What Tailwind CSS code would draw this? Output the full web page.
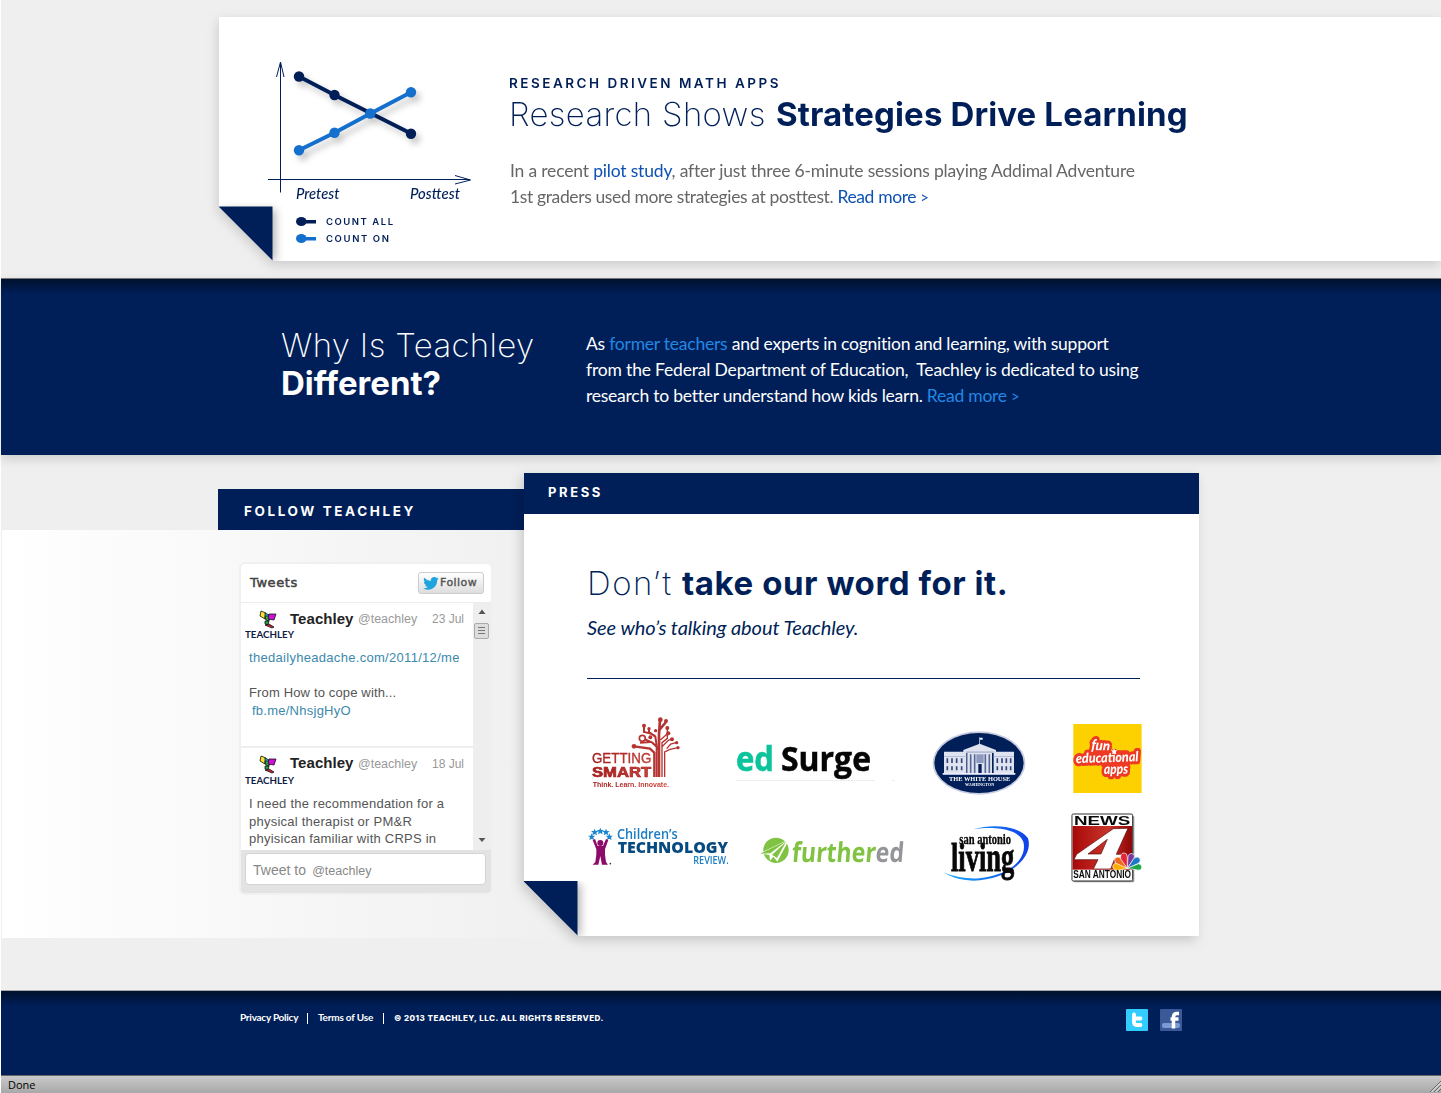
<!DOCTYPE html>
<html lang="en">
<head>
<meta charset="utf-8">
<title>Teachley</title>
<script src="https://cdn.jsdelivr.net/npm/@tailwindcss/browser@4"></script>
</head>
<body class="bg-white overflow-hidden text-[#001f58] font-[Lato,sans-serif]">
<div class="ml-px w-[1440px] h-[1093px] bg-[#efefef] flex flex-col whitespace-nowrap">

  <!-- Research card -->
  <section class="h-[278px] pt-[17px] pl-[218px] shrink-0 relative">
    <div class="drop-shadow-[-1px_4px_6px_rgba(0,0,0,0.15)]">
      <div class="h-[244px] w-[1222px] bg-white flex [clip-path:polygon(0_0,100%_0,100%_100%,54px_100%,0_190px)]">
        <svg class="w-[281px] h-[244px] shrink-0" viewBox="219 17 281 244" font-family="Lato, sans-serif" fill="#001f58">
          <g stroke="#001f58" fill="none">
            <path d="M280.500 62.500V192.500M276.500 77L280.500 62L284 77M268 179.500H470M455 175.500L470.500 180L455 184"/>
          </g>
          <g style="filter:drop-shadow(4px 5px 3px rgba(0,0,0,.22))">
            <path d="M299 76.500L334.500 95L411 133.500" stroke="#001f58" stroke-width="4" fill="none"/>
            <circle cx="299" cy="76.500" r="5.200"/><circle cx="334.500" cy="95" r="5.200"/><circle cx="411" cy="133.700" r="5.200"/>
            <g fill="#146fcd"><path d="M299 150.300L334.500 132.700L370.500 113.500L411 92.300" stroke="#146fcd" stroke-width="4" fill="none"/>
            <circle cx="299" cy="150.300" r="5.200"/><circle cx="334.500" cy="132.700" r="5.200"/><circle cx="370.300" cy="113.500" r="5.200"/><circle cx="411" cy="92.300" r="5.200"/></g>
          </g>
          <g font-size="16" font-style="italic" font-weight="500">
            <text x="296" y="199" textLength="43.500" lengthAdjust="spacingAndGlyphs">Pretest</text>
            <text x="410" y="199" textLength="50" lengthAdjust="spacingAndGlyphs">Posttest</text>
          </g>
          <ellipse cx="301.300" cy="221.500" rx="5.300" ry="4.600"/><path d="M301 220h15v3.600h-15z"/>
          <g fill="#146fcd"><ellipse cx="301.300" cy="238.500" rx="5.300" ry="4.600"/><path d="M301 237h15v3.600h-15z"/></g>
          <g font-family="Inter, sans-serif" font-size="9.500" font-weight="600">
            <text x="326" y="225" textLength="67">COUNT ALL</text>
            <text x="326" y="242" textLength="63">COUNT ON</text>
          </g>
          <path d="M218 206.500H272.500V261z" style="filter:drop-shadow(3px 3px 4px rgba(0,0,0,.3))"/>
        </svg>
        <div class="pl-[9px] pt-[57px]">
          <p class="font-[Inter] font-semibold text-[13.5px] leading-[18px] tracking-[2.5px]">RESEARCH DRIVEN MATH APPS</p>
          <h1 class="font-[Inter] text-[33px] leading-[40px] mt-[2px] flex"><span class="font-extralight tracking-[0.3px] w-[267px]">Research Shows</span><b class="font-bold tracking-[0.13px]">Strategies Drive Learning</b></h1>
          <div class="text-[17.5px] leading-[26px] text-[#666] mt-[24px] ml-px">
            <p class="tracking-[-0.18px]">In a recent <a class="text-[#0d51b3]">pilot study</a>, after just three 6-minute sessions playing Addimal Adventure</p>
            <p class="tracking-[-0.37px]">1st graders used more strategies at posttest. <a class="text-[#0d51b3]">Read more <span class="text-[15px]">&gt;</span></a></p>
          </div>
        </div>
      </div>
    </div>
  </section>

  <!-- Mission band -->
  <section class="h-[177px] shrink-0 border-t border-[#777] bg-[#001f58] bg-linear-to-b from-[#00102e] to-[#001f58] to-[15px] shadow-[0_4px_10px_rgba(0,0,0,0.14)] text-white flex pl-[280px]">
    <h2 class="w-[305px] pt-[47px] font-[Inter] text-[33px] leading-[38px]"><span class="block font-extralight tracking-[0.35px]">Why Is Teachley</span><b class="block font-bold">Different?</b></h2>
    <div class="pt-[52px] text-[17.5px] leading-[26px]">
      <p class="tracking-[-0.23px]">As <a class="text-[#2288e3]">former teachers</a> and experts in cognition and learning, with support</p>
      <p class="tracking-[-0.18px]">from the Federal Department of Education,&nbsp; Teachley is dedicated to using</p>
      <p class="tracking-[-0.24px]">research to better understand how kids learn. <a class="text-[#2288e3]">Read more <span class="text-[15px]">&gt;</span></a></p>
    </div>
  </section>

  <!-- Follow + Press -->
  <section class="h-[535px] shrink-0 flex">
    <div class="w-[523px] shrink-0 pt-[34px]">
      <h3 class="ml-[217px] h-[41px] bg-[#001f58] text-white font-[Inter] font-bold text-[13.5px] leading-[44px] pl-[26px] tracking-[2.6px]">FOLLOW TEACHLEY</h3>
      <div class="ml-px w-[576px] h-[408px] bg-linear-to-r from-white to-[#efefef] pt-[32px] pl-[237px]">
        <!-- Timeline widget -->
        <div class="w-[254px] h-[333px] border-2 border-[#f0f0f0] rounded-md bg-[#e3e3e3] overflow-hidden font-[Liberation_Sans,sans-serif] text-[13px] text-[#555] flex flex-col">
          <div class="h-[38px] bg-white flex items-center justify-between pl-[9px] pr-[7px] shrink-0">
            <b class="font-[DejaVu_Sans] font-normal text-[13px] leading-[18px] tracking-[0.6px] [-webkit-text-stroke:0.5px_#444] text-[#444]">Tweets</b>
            <span class="w-[66px] h-[22px] border border-[#ccc] rounded-[3px] bg-linear-to-b from-white to-[#dedede] flex items-center pl-1 gap-[1px] font-[DejaVu_Sans] text-[11px] tracking-[0.45px] [-webkit-text-stroke:0.4px_#555]">
              <svg class="w-[16px] h-[13px] shrink-0" viewBox="0 0 24 20" fill="#1fa5dd"><path d="M24 2.400a10 10 0 0 1-2.800.8A5 5 0 0 0 23.300.5a10 10 0 0 1-3.100 1.200 4.900 4.900 0 0 0-8.400 4.500A14 14 0 0 1 1.700 1a4.900 4.900 0 0 0 1.500 6.600A5 5 0 0 1 1 7a4.900 4.900 0 0 0 4 4.900 5 5 0 0 1-2.300 0 4.900 4.900 0 0 0 4.600 3.500A10 10 0 0 1 0 17.400 14 14 0 0 0 21.500 5 10 10 0 0 0 24 2.400z"/></svg>Follow</span>
          </div>
          <div class="h-[248px] flex border-t border-[#ececec] shrink-0">
            <div class="w-[232px] bg-white overflow-hidden shrink-0">
              <article class="h-[145px] border-b-2 border-[#eee]">
                <header class="flex h-[37px] pt-[5px]">
                  <svg class="w-[50px] h-[32px] shrink-0 ml-[4px]" viewBox="0 0 50 32"><g stroke="#111" stroke-width=".8"><path fill="#ffe030" d="M16 3l5 2-1 6-5-3z"/><path fill="#15c8e8" d="M20 5l4 2 1 4-5 0z"/><path fill="#28c040" d="M20 8l5 0-1 5-3-1z"/><path fill="#d010d8" d="M24 6l7 0-2 6-6-1z"/><path fill="#28a040" d="M20 13l4 0-1 4-3-1z"/><path fill="#c22a28" d="M20 17l4-1 5 3-2 1z"/></g><text x="0" y="30" font-family="Lato" font-weight="700" font-size="9.500" fill="#101c44" textLength="49" lengthAdjust="spacingAndGlyphs">TEACHLEY</text></svg>
                  <b class="text-[15px] leading-[21px] ml-[-5px] w-[68px] text-[#222] tracking-[0.05px]">Teachley</b><span class="text-[12.5px] leading-[23px] w-[74px] text-[#999]">@teachley</span><span class="text-[12px] leading-[23px] text-[#999]">23 Jul</span>
                </header>
                <p class="pl-2 pt-[9px] w-[218px] overflow-hidden leading-[17.5px] text-[#3b89ab]"><a class="tracking-[0.3px]">thedailyheadache.com/2011/12/me</a></p>
                <p class="pl-2 pt-[17px] leading-[18px] tracking-[0.15px]">From How to cope with...<br><a class="pl-[3px] tracking-[0.25px] text-[#3b89ab]">fb.me/NhsjgHyO</a></p>
              </article>
              <article>
                <header class="flex h-[37px] pt-[5px]">
                  <svg class="w-[50px] h-[32px] shrink-0 ml-[4px]" viewBox="0 0 50 32"><g stroke="#111" stroke-width=".8"><path fill="#ffe030" d="M16 3l5 2-1 6-5-3z"/><path fill="#15c8e8" d="M20 5l4 2 1 4-5 0z"/><path fill="#28c040" d="M20 8l5 0-1 5-3-1z"/><path fill="#d010d8" d="M24 6l7 0-2 6-6-1z"/><path fill="#28a040" d="M20 13l4 0-1 4-3-1z"/><path fill="#c22a28" d="M20 17l4-1 5 3-2 1z"/></g><text x="0" y="31" font-family="Lato" font-weight="700" font-size="9.500" fill="#101c44" textLength="49" lengthAdjust="spacingAndGlyphs">TEACHLEY</text></svg>
                  <b class="text-[15px] leading-[20px] ml-[-5px] w-[68px] text-[#222] tracking-[0.05px]">Teachley</b><span class="text-[12.5px] leading-[22px] w-[74px] text-[#999]">@teachley</span><span class="text-[12px] leading-[23px] text-[#999]">18 Jul</span>
                </header>
                <p class="pl-2 pt-[10px] leading-[17.5px] tracking-[0.24px]">I need the recommendation for a<br>physical therapist or PM&amp;R<br>phyisican familiar with CRPS in</p>
              </article>
            </div>
            <svg class="w-[18px] h-[247px] bg-[#eee] shrink-0" viewBox="0 0 18 247"><path fill="#555" d="M5.500 11L9 6.500l3.500 4.500zM5.500 235h7L9 239z"/><rect x="1.500" y="20.500" width="14" height="15" rx="1.500" fill="#ddd" stroke="#aaa"/><path stroke="#777" d="M5 24.500h7M5 27.500h7M5 30.500h7"/></svg>
          </div>
          <div class="pt-[3px] pl-[4px]"><div class="w-[241px] h-[32px] rounded-[4px] bg-white border border-[#d4d4d4] pl-[7px] text-[#888] leading-[32px]"><span class="text-[14px]">Tweet to</span>&nbsp; <span class="text-[12.5px] -ml-px">@teachley</span></div></div>
        </div>
      </div>
    </div>
    <div class="pt-[18px] relative">
      <div class="w-[675px] drop-shadow-[-3px_4px_6px_rgba(0,0,0,0.17)]">
        <div class="relative h-[463px] bg-white [clip-path:polygon(0_0,100%_0,100%_100%,54px_100%,0_409px)]">
          <h3 class="h-[41px] bg-[#001f58] text-white font-[Inter] font-bold text-[13px] leading-[39px] pl-[24px] tracking-[2.6px]">PRESS</h3>
          <div class="pl-[62px] pt-[50px]">
            <h2 class="ml-px font-[Inter] text-[33px] leading-[39px] flex"><span class="font-extralight w-[95px] tracking-[1.5px]">Don’t</span><b class="tracking-[0.57px]">take our word for it.</b></h2>
            <p class="ml-px mt-[11px] text-[20px] leading-[26px] italic tracking-[-0.07px]">See who’s talking about Teachley.</p>
            <div class="ml-px w-[553px] h-px mt-[38px] bg-[#001f58]"></div>
            <div class="flex mt-[31px] h-[90px]">
              <svg class="w-[124px] h-[90px]" viewBox="586 710 124 90" role="img" aria-label="Getting Smart">
                <defs><linearGradient id="gs" x1="0" y1="0" x2="1" y2="0"><stop offset="0" stop-color="#a31c1c"/><stop offset="1" stop-color="#cf4a3f"/></linearGradient></defs>
                <g transform="translate(570 700) scale(.3333)">
                  <g stroke="#b53431" fill="none" stroke-width="5">
                    <path stroke-width="7" d="M253 231V158L240 146L192 139"/><path stroke-width="6" d="M260 231V140L247 128L215 114M241 126L210 128M262 150L256 110L237 96V86M256 108L240 100L222 96V77"/><path stroke-width="8" d="M267 231V105L270 60M268 90L288 66"/><path stroke-width="4" d="M276 231V128L292 115V86M276 140L296 120L306 118M284 231V156L300 148L324 143M290 146L302 132L318 128M271 120L294 100"/>
                  </g>
                  <g fill="#b53431"><circle cx="271" cy="59" r="7"/><circle cx="288" cy="63" r="6"/><circle cx="222" cy="77" r="6"/><circle cx="237" cy="86" r="5"/><circle cx="192" cy="139" r="7"/><circle cx="241" cy="112" r="6"/><circle cx="292" cy="84" r="6"/><circle cx="295" cy="100" r="6"/><circle cx="306" cy="118" r="6"/><circle cx="320" cy="128" r="5"/><circle cx="324" cy="143" r="5"/><circle cx="257" cy="92" r="5"/></g>
                  <circle cx="217" cy="115" r="9" fill="#fff" stroke="#b53431" stroke-width="5"/>
                  <g font-family="Liberation Sans, sans-serif" fill="url(#gs)">
                    <text x="66" y="189" font-size="44" textLength="178" lengthAdjust="spacingAndGlyphs" stroke="#a82423">GETTING</text>
                    <text x="66" y="230" font-size="43" font-weight="700" textLength="178" lengthAdjust="spacingAndGlyphs" stroke="#a82423" stroke-width="2">SMART</text>
                    <text x="68" y="260" font-size="20" font-weight="700" textLength="229" lengthAdjust="spacingAndGlyphs">Think. Learn. Innovate.</text>
                  </g>
                </g>
              </svg>
              <svg class="w-[210px] h-[90px]" viewBox="710 710 210 90" font-family="Open Sans, sans-serif" font-weight="700">
                <path d="M736 780.500h139M892 780.500h3" stroke="#eee"/>
                <text x="736" y="771" font-size="34" fill="#0cc49c" stroke="#0cc49c" stroke-width=".5" textLength="38" lengthAdjust="spacingAndGlyphs">ed</text>
                <text x="781" y="771" font-size="34" fill="#050505" stroke="#050505" stroke-width=".5" textLength="90" lengthAdjust="spacingAndGlyphs">Surge</text>
              </svg>
              <svg class="w-[120px] h-[90px]" viewBox="920 710 120 90">
                <g transform="translate(910 700) scale(.3333)">
                  <ellipse cx="207" cy="189" rx="139" ry="95" fill="#c7cbe0"/><ellipse cx="207" cy="189" rx="134" ry="90" fill="#001f58"/>
                  <path fill="#dfe3ef" d="M102 155h67v64h-67zM251 155h61v64h-61zM160 150L209 131l49 19v7h-98zM172 152h74v68h-74z"/>
                  <path fill="#b6bdd6" d="M102 168h67v3h-67zM251 168h61v3h-61zM168 154h84v5h-84z"/>
                  <path stroke="#34477c" stroke-width="5" stroke-dasharray="14 10 12 50" d="M112 175v40M126 175v40M140 175v40M155 175v40M262 175v40M276 175v40M289 175v40M302 175v40"/>
                  <path stroke="#5a6a98" stroke-width="5" d="M182 163v56M194 163v56M226 163v56M238 163v56"/><path fill="#8e99be" d="M199 163h22v26h-22z"/><path fill="#001f58" d="M205 192h10v27h-10z"/><path fill="#eef" d="M208 112h2v20h-2zM209 113h9v6h-9zM98 219h218v5H98z"/>
                  <g fill="#fff" font-family="Liberation Serif, serif" font-weight="700"><text x="117" y="242" font-size="17" textLength="184" lengthAdjust="spacingAndGlyphs">THE WHITE HOUSE</text><text x="165" y="259" font-size="13" textLength="88" lengthAdjust="spacingAndGlyphs">WASHINGTON</text></g>
                </g>
              </svg>
              <svg class="w-[110px] h-[90px]" viewBox="1040 710 110 90">
                <defs><pattern id="dots" width="8" height="8" patternUnits="userSpaceOnUse"><rect width="8" height="8" fill="#ffdc00"/><circle cx="2" cy="2" r="1.700" fill="#f7b800"/><circle cx="6" cy="6" r="1.700" fill="#f7b800"/></pattern></defs>
                <g transform="translate(910 700) scale(.3333)">
                  <rect x="490" y="72" width="205" height="207" fill="url(#dots)"/>
                  <g font-family="Lato, sans-serif" font-weight="900" font-style="italic" fill="#fff" stroke="#ee3a24" stroke-width="18" stroke-linejoin="round" paint-order="stroke">
                    <text transform="translate(543 150) rotate(5)" font-size="46" textLength="56" lengthAdjust="spacingAndGlyphs">fun</text>
                    <path d="M560 160L650 160L650 205L590 205z" fill="#ee3a24"/>
                    <text transform="translate(582 222) rotate(-1)" font-size="42" textLength="72" lengthAdjust="spacingAndGlyphs">apps</text>
                    <text transform="translate(498 190) rotate(-2)" font-size="41" textLength="188" lengthAdjust="spacingAndGlyphs">educational</text>
                  </g>
                  <path fill="#fff" d="M612 144l3 7 7 0-5 5 2 7-7-4-6 4 2-7-5-5 7 0z"/>
                </g>
              </svg>
            </div>
            <div class="flex mt-[8px] h-[80px]">
              <svg class="w-[159px] h-[80px]" viewBox="586 808 159 80">
                <g transform="translate(570 700) scale(.3333)">
                  <path fill="#1a86d0" d="M65 400l3 7 8 0-6 5 2 8-7-4-7 4 2-8-6-5 8 0zM74 386l3 7 8 0-6 5 2 8-7-4-7 4 2-8-6-5 8 0zM91 383l3 7 8 0-6 5 2 8-7-4-7 4 2-8-6-5 8 0zM108 386l3 7 8 0-6 5 2 8-7-4-7 4 2-8-6-5 8 0zM118 400l3 7 8 0-6 5 2 8-7-4-7 4 2-8-6-5 8 0z"/>
                  <circle cx="91" cy="429" r="9" fill="#8c0a68"/>
                  <path fill="#8c0a68" d="M68 420l7-3 8 21h16l9-21 7 3-10 28v16l3 22 6 8h-18l-5-26-6 26H68l8-8 3-22v-16z"/>
                  <circle cx="121" cy="491" r="2.500" fill="#333"/>
                  <g font-family="Open Sans, Noto Sans, sans-serif" fill="#1a7cc4">
                    <text x="141" y="417" font-size="42" font-weight="600" textLength="182" lengthAdjust="spacingAndGlyphs">Children’s</text>
                    <text x="143" y="460" font-size="49" font-weight="800" fill="#064a80" textLength="331" lengthAdjust="spacingAndGlyphs">TECHNOLOGY</text>
                    <text x="370" y="493" font-size="30" font-weight="600" textLength="106" lengthAdjust="spacingAndGlyphs">REVIEW.</text>
                  </g>
                </g>
              </svg>
              <svg class="w-[180px] h-[80px]" viewBox="745 808 180 80">
                <g transform="translate(720 700) scale(.3333)">
                  <circle cx="168" cy="451" r="38" fill="#80c342"/>
                  <path fill="#fff" d="M120 460L208 417L172 485L160 470L150 482L148 465z"/><path fill="#80c342" d="M120 461l80-39-49 38zM156 464l42-38-27 48z"/>
                  <text transform="translate(214 485) skewX(-5)" font-family="Open Sans, sans-serif" font-weight="700" font-size="82" textLength="336" lengthAdjust="spacingAndGlyphs"><tspan fill="#80c342">further</tspan><tspan fill="#939598">ed</tspan></text>
                </g>
              </svg>
              <svg class="w-[125px] h-[80px]" viewBox="925 808 125 80">
                <defs><linearGradient id="sw"><stop offset="0" stop-color="#1ab0ff"/><stop offset="1" stop-color="#1040e8"/></linearGradient></defs>
                <g transform="translate(910 700) scale(.3333)">
                  <path fill="url(#sw)" d="M190 388C250 370 330 378 354 415C372 470 300 540 190 542C150 541 120 530 100 517C140 534 190 539 220 533C310 520 352 470 340 425C325 385 250 378 190 388z"/>
                  <g font-family="Liberation Serif, serif" font-weight="700" fill="#080808" stroke="#080808">
                    <text x="148" y="431" font-size="46" textLength="155" lengthAdjust="spacingAndGlyphs">san antonio</text>
                    <text transform="translate(123 512) scale(1 1.260)" font-size="96" textLength="190" lengthAdjust="spacingAndGlyphs" stroke-width="2">living</text>
                  </g>
                </g>
              </svg>
              <svg class="w-[100px] h-[80px]" viewBox="1050 808 100 80">
                <defs><linearGradient id="red"><stop offset="0" stop-color="#a80808"/><stop offset=".6" stop-color="#c8362a"/><stop offset="1" stop-color="#8e0505"/></linearGradient></defs>
                <g transform="translate(910 700) scale(.3333)">
                  <rect x="490" y="347" width="183" height="200" rx="4" fill="#999"/><rect x="486" y="342" width="182" height="201" rx="4" fill="#fff" stroke="#333" stroke-width="3"/>
                  <rect x="488" y="378" width="178" height="131" fill="url(#red)"/>
                  <path fill="#fff" stroke="#5a0a0a" stroke-width="2" d="M610 386L654 385L619 463H640L632 479H613L602 507H550L564 479H492L500 463zM592 418L534 462H573z"/>
                  <g transform="translate(652 505)" stroke="#fff" stroke-width="2"><path fill="#f9b000" d="M0 0L-32 7Q-48 0-42-10Q-38-18-28-16z"/><path fill="#ef6c1a" d="M0 0L-36-16Q-42-34-28-34Q-22-34-18-28z"/><path fill="#e3243b" d="M0 0L-20-28Q-22-46-10-46Q0-46 0-34z"/><path fill="#7a3a9c" d="M0 0L2-34Q4-46 14-44Q24-42 20-30z"/><path fill="#1e78c8" d="M0 0L20-30Q30-38 37-30Q42-22 34-15z"/><path fill="#1fa64a" d="M0 0L34-14Q46-10 43 0Q38 8 30 5z"/></g>
                  <g font-family="Liberation Sans, sans-serif" font-weight="700" fill="#0a0a0a"><text x="492" y="374" font-size="36" textLength="169" lengthAdjust="spacingAndGlyphs">NEWS</text><text x="490" y="534" font-size="30" textLength="173" lengthAdjust="spacingAndGlyphs">SAN ANTONIO</text></g>
                </g>
              </svg>
            </div>
          </div>
          <svg class="absolute left-0 top-[408px] w-[70px] h-[55px]" viewBox="0 0 70 55"><path d="M-1 0H53.500V55z" fill="#001f58" style="filter:drop-shadow(3px 3px 4px rgba(0,0,0,.3))"/></svg>
        </div>
      </div>
    </div>
  </section>

  <!-- Footer -->
  <footer class="h-[85px] shrink-0 border-t border-[#aaa] bg-[#001f58] bg-linear-to-b from-[#00102e] to-[#001f58] to-[15px] text-white flex justify-between pl-[239px] pr-[259px] pt-[18px]">
    <div class="flex items-start text-[10px] leading-[17px] font-bold">
      <a class="w-[67px] tracking-[-0.25px]">Privacy Policy</a><i class="w-px h-[11px] bg-white mt-[4px]"></i>
      <a class="w-[65px] pl-[10px] tracking-[-0.2px] box-content">Terms of Use</a><i class="w-px h-[11px] bg-white mt-[4px]"></i>
      <span class="pl-[10px] font-[Inter] font-extrabold text-[8px] leading-[18px] tracking-[0.47px]">© 2013 TEACHLEY, LLC. ALL RIGHTS RESERVED.</span>
    </div>
    <div class="flex gap-[12px]">
      <svg class="w-[22px] h-[22px]" viewBox="0 0 22 22"><rect width="22" height="22" rx="1" fill="#33ccff"/><path d="M8 5.500V13Q8 16 11 16H14.500M8 9.500H14.500" stroke="#fff" stroke-width="3.800" stroke-linecap="round" fill="none"/></svg>
      <svg class="w-[22px] h-[22px]" viewBox="0 0 22 22"><rect width="22" height="22" rx="1" fill="#3b5998"/><rect x="2" y="14" width="18" height="5" rx="2" fill="#7c99d4"/><path d="M13.500 19.500V8Q13.500 4.500 17 4.500H19M10.500 10H18.500" stroke="#fff" stroke-width="3.500" fill="none"/></svg>
    </div>
  </footer>
  <div class="h-[18px] shrink-0 border-t border-[#666] bg-linear-to-b from-[#cacaca] to-[#a8a8a8] text-black font-[Open_Sans,sans-serif] text-[11px] leading-[17px] pl-[7px] flex justify-between items-start">
    <span>Done</span>
    <svg class="w-[14px] h-[16px]" viewBox="0 0 14 16"><path d="M3 16L14 5M7 16l7-7M11 16l3-3" stroke="#666"/><path d="M4.500 16L14 6.500M8.500 16l5.500-5.500" stroke="#eee"/></svg>
  </div>
</div>
</body>
</html>
